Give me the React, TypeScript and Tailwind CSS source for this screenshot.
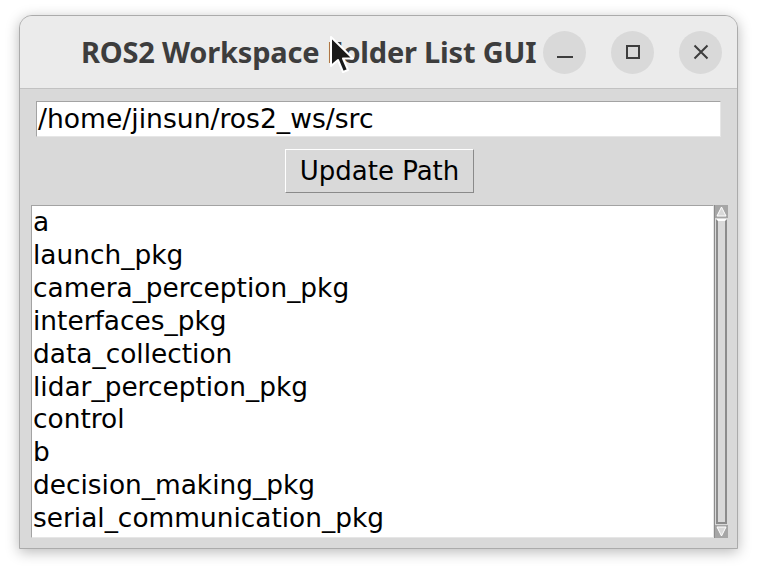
import React from 'react';

const packages = [
  'a',
  'launch_pkg',
  'camera_perception_pkg',
  'interfaces_pkg',
  'data_collection',
  'lidar_perception_pkg',
  'control',
  'b',
  'decision_making_pkg',
  'serial_communication_pkg',
];

const tkFont = { fontFamily: '"DejaVu Sans", sans-serif' };

function TitleButton({ children }: { children: React.ReactNode }) {
  return (
    <div className="flex h-[43px] w-[43px] items-center justify-center rounded-full bg-[#d9d9d9]">
      {children}
    </div>
  );
}

function Scrollbar() {
  return (
    <div className="flex w-[14px] flex-col border-l border-[#8c8c8c] bg-[#d9d9d9]">
      {/* up arrow */}
      <div className="flex h-[13px] items-center justify-center bg-[#a6a6a6]">
        <svg width="11" height="11" viewBox="0 0 11 11">
          <polygon points="5.5,1 10,10 1,10" fill="#d9d9d9" stroke="#ffffff" strokeWidth="1" />
        </svg>
      </div>
      {/* slider */}
      <div className="mx-[1px] my-[1px] flex-1 border-l-2 border-r-2 border-t-2 border-b-2 border-l-[#8c8c8c] border-r-[#8c8c8c] border-t-[#ffffff] border-b-[#8c8c8c] bg-[#d9d9d9]" />
      {/* down arrow */}
      <div className="flex h-[13px] items-center justify-center bg-[#a6a6a6]">
        <svg width="11" height="11" viewBox="0 0 11 11">
          <polygon points="1,1 10,1 5.5,10" fill="#d9d9d9" stroke="#ffffff" strokeWidth="1" />
        </svg>
      </div>
    </div>
  );
}

export default function App() {
  return (
    <div className="relative h-[568px] w-[757px] overflow-hidden bg-white pl-[19px] pt-[15px]">
      {/* window */}
      <div className="flex h-[534px] w-[719px] flex-col overflow-hidden rounded-t-[13px] border border-[#ababab] bg-[#d9d9d9] shadow-[0_3px_14px_rgba(0,0,0,0.28)]">
        {/* title bar */}
        <div className="flex h-[73px] items-center border-b border-[#c2c2c2] bg-[#ebebeb] pr-[15px]">
          <div
            className="flex-1 whitespace-nowrap pl-[61px] text-[29px] font-bold tracking-[-0.2px] text-[#3d3d3d]"
            style={{ fontFamily: '"Noto Sans", "Open Sans", sans-serif' }}
          >
            ROS2 Workspace Folder List GUI
          </div>
          <div className="flex gap-[25px]">
            <TitleButton>
              <div className="mt-[9px] h-[2px] w-[16px] bg-[#3d3d3d]" />
            </TitleButton>
            <TitleButton>
              <div className="h-[14px] w-[14px] border-2 border-[#3d3d3d]" />
            </TitleButton>
            <TitleButton>
              <svg width="16" height="16" viewBox="0 0 16 16">
                <path d="M1.5 1.5 L14.5 14.5 M14.5 1.5 L1.5 14.5" stroke="#3d3d3d" strokeWidth="2" />
              </svg>
            </TitleButton>
          </div>
        </div>

        {/* content */}
        <div className="flex flex-1 flex-col pl-[11px] pr-[9px] pb-[10px] pt-[12px]" style={tkFont}>
          <div className="ml-[5px] mr-[7px] h-[36px] border border-t-[#a3a3a3] border-l-[#a3a3a3] border-b-[#e6e6e6] border-r-[#e6e6e6] bg-white pl-[1px] text-[26.6px] leading-[34px] text-black">
            /home/jinsun/ros2_ws/src
          </div>
          <div className="mt-[12px] flex justify-center">
            <button className="h-[44px] w-[189px] border border-t-white border-l-white border-b-[#8a8a8a] border-r-[#8a8a8a] bg-[#d9d9d9] text-[26px] leading-[40px] text-black">
              Update Path
            </button>
          </div>
          <div className="mt-[12px] flex flex-1">
            <div className="flex-1 border border-t-[#a3a3a3] border-l-[#a3a3a3] border-b-[#e6e6e6] border-r-[#e6e6e6] bg-white pl-[1px] text-[26.4px] leading-[32.9px] text-black">
              {packages.map((p) => (
                <div key={p} className="whitespace-nowrap">
                  {p}
                </div>
              ))}
            </div>
            <Scrollbar />
          </div>
        </div>
      </div>

      {/* mouse pointer */}
      <svg className="absolute left-[329px] top-[35px]" width="30" height="42" viewBox="0 0 30 42">
        <path
          d="M2 2 L2 31 L9 25 L14 37 L19 35 L14 23.5 L24 23.5 Z"
          fill="#1a1a1a"
          stroke="#ffffff"
          strokeWidth="2"
          strokeLinejoin="round"
        />
      </svg>
    </div>
  );
}
